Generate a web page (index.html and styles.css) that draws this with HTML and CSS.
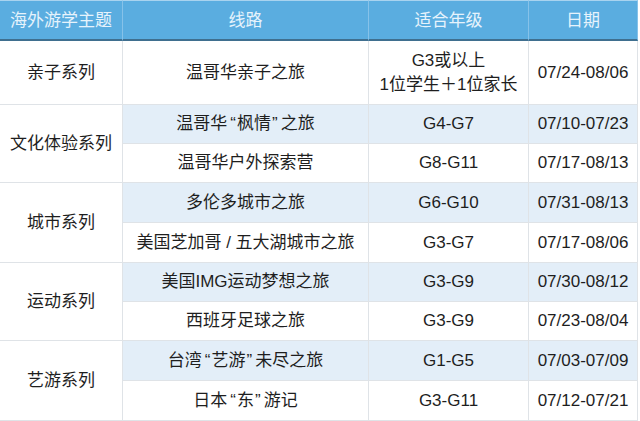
FILE: index.html
```html
<!DOCTYPE html>
<html lang="zh-CN">
<head>
<meta charset="utf-8">
<title>海外游学主题</title>
<link rel="stylesheet" href="styles.css">
</head>
<body>
<div class="table">
  <div class="th">海外游学主题</div>
  <div class="th">线路</div>
  <div class="th">适合年级</div>
  <div class="th">日期</div>

  <div class="td theme">亲子系列</div>
  <div class="td">温哥华亲子之旅</div>
  <div class="td two">G3或以上<br>1位学生＋1位家长</div>
  <div class="td">07/24-08/06</div>

  <div class="td theme span2">文化体验系列</div>
  <div class="td alt">温哥华<span class="ql">“</span>枫情<span class="qr">”</span>之旅</div>
  <div class="td alt">G4-G7</div>
  <div class="td alt">07/10-07/23</div>
  <div class="td">温哥华户外探索营</div>
  <div class="td">G8-G11</div>
  <div class="td">07/17-08/13</div>

  <div class="td theme span2">城市系列</div>
  <div class="td alt">多伦多城市之旅</div>
  <div class="td alt">G6-G10</div>
  <div class="td alt">07/31-08/13</div>
  <div class="td">美国芝加哥 / 五大湖城市之旅</div>
  <div class="td">G3-G7</div>
  <div class="td">07/17-08/06</div>

  <div class="td theme span2">运动系列</div>
  <div class="td alt">美国IMG运动梦想之旅</div>
  <div class="td alt">G3-G9</div>
  <div class="td alt">07/30-08/12</div>
  <div class="td">西班牙足球之旅</div>
  <div class="td">G3-G9</div>
  <div class="td">07/23-08/04</div>

  <div class="td theme span2">艺游系列</div>
  <div class="td alt">台湾<span class="ql">“</span>艺游<span class="qr">”</span>未尽之旅</div>
  <div class="td alt">G1-G5</div>
  <div class="td alt">07/03-07/09</div>
  <div class="td">日本<span class="ql">“</span>东<span class="qr">”</span>游记</div>
  <div class="td">G3-G11</div>
  <div class="td">07/12-07/21</div>
</div>
</body>
</html>
```

FILE: styles.css
```css
html, body {
  margin: 0;
  padding: 0;
  background: #ffffff;
}
body {
  width: 640px;
  height: 421px;
  overflow: hidden;
  font-family: "Liberation Sans", "Noto Sans CJK SC", sans-serif;
  font-size: 17px;
  color: #1e1e1e;
}
.table {
  display: grid;
  width: 638px;
  grid-template-columns: 123px 246px 160px 109px;
  grid-template-rows: 41px 64px 39px 39px 40px 40px 39px 39px 40px 40px;
}
.th {
  background: #5aade0;
  color: #e6f3fc;
  border-top: 1px solid #a8d3ef;
  border-right: 1px solid #86c2e9;
  border-bottom: 2px solid #3f6f8f;
  display: flex;
  align-items: center;
  justify-content: center;
  line-height: 20px;
  padding-top: 1px;
}
.th:last-child {
  border-right-color: #cfe3f0;
}
.td {
  background: #ffffff;
  border-right: 1px solid #dfe3e7;
  border-bottom: 1px solid #dfe3e7;
  display: flex;
  align-items: center;
  justify-content: center;
  text-align: center;
  line-height: 20px;
  white-space: nowrap;
}
.td.alt {
  background: #e3eef8;
}
.td.two {
  line-height: 24px;
}
.span2 {
  grid-row: span 2;
}
.ql {
  margin-left: 3px;
  margin-right: 1px;
}
.qr {
  margin-left: 1px;
  margin-right: 3px;
}
```
